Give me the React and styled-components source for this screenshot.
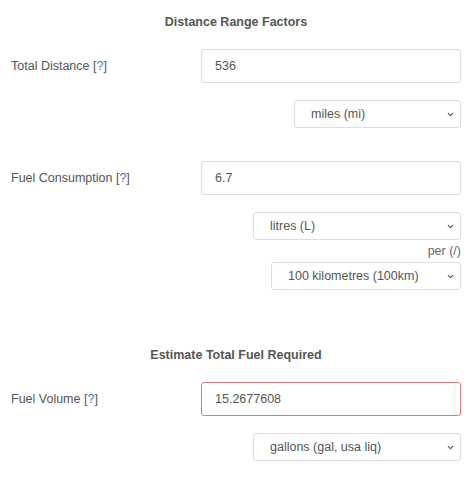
import styled, { createGlobalStyle } from 'styled-components';
import { ChevronDown } from 'lucide-react';

const GlobalStyle = createGlobalStyle`
  body {
    margin: 0;
    background: #fff;
    font-family: 'Liberation Sans', Arial, sans-serif;
    color: #555;
  }
`;

const Page = styled.div`
  width: 474px;
  padding: 12px 13px 0 11px;
  box-sizing: border-box;
`;

const Heading = styled.h3`
  margin: ${(p) => (p.$first ? '0' : '55px')} 0 17px;
  line-height: 20px;
  font-size: 12.5px;
  font-weight: bold;
  text-align: center;
  color: #555;
`;

const Row = styled.div`
  display: grid;
  grid-template-columns: 190px 1fr;
  align-items: center;
`;

const Label = styled.label`
  font-size: 12.5px;
  color: #555;
`;

const Help = styled.a`
  color: #337ab7;
  text-decoration: none;
`;

const Input = styled.input`
  height: 34px;
  box-sizing: border-box;
  width: 100%;
  padding: 0 13px;
  border: 1px solid ${(p) => (p.$invalid ? '#dd7b7e' : '#ddd')};
  border-radius: 3px;
  font-family: inherit;
  font-size: 12.5px;
  color: #555;
  outline: none;
`;

const Field = styled.div`
  margin-bottom: 33px;
`;

const UnitRow = styled.div`
  display: flex;
  justify-content: flex-end;
  margin-top: ${(p) => p.$gap || 0}px;
`;

const SelectWrap = styled.div`
  position: relative;
  width: ${(p) => p.$width}px;
`;

const Select = styled.select`
  appearance: none;
  width: 100%;
  height: 28px;
  box-sizing: border-box;
  padding: 0 28px 0 16px;
  border: 1px solid #ddd;
  border-radius: 3px;
  background: #fff;
  font-family: inherit;
  font-size: 12.5px;
  color: #555;
  outline: none;
`;

const Caret = styled(ChevronDown)`
  position: absolute;
  right: 6px;
  top: 10px;
  pointer-events: none;
  color: #555;
`;

const Per = styled.div`
  text-align: right;
  font-size: 12.5px;
  line-height: 22px;
  color: #666;
`;

const UnitSelect = ({ width, value, gap }) => (
  <UnitRow $gap={gap}>
    <SelectWrap $width={width}>
      <Select defaultValue={value}>
        <option>{value}</option>
      </Select>
      <Caret size={9} strokeWidth={3} />
    </SelectWrap>
  </UnitRow>
);

const App = () => (
  <Page>
    <GlobalStyle />
    <Heading $first>Distance Range Factors</Heading>
    <Field>
      <Row>
        <Label>
          Total Distance [<Help href="#">?</Help>]
        </Label>
        <Input defaultValue="536" />
      </Row>
      <UnitSelect width={167} value="miles (mi)" gap={17} />
    </Field>
    <Field>
      <Row>
        <Label>
          Fuel Consumption [<Help href="#">?</Help>]
        </Label>
        <Input defaultValue="6.7" />
      </Row>
      <UnitSelect width={208} value="litres (L)" gap={17} />
      <Per>per (/)</Per>
      <UnitSelect width={190} value="100 kilometres (100km)" />
    </Field>
    <Heading>Estimate Total Fuel Required</Heading>
    <Row>
      <Label>
        Fuel Volume [<Help href="#">?</Help>]
      </Label>
      <Input $invalid defaultValue="15.2677608" />
    </Row>
    <UnitSelect width={208} value="gallons (gal, usa liq)" gap={17} />
  </Page>
);

export default App;
